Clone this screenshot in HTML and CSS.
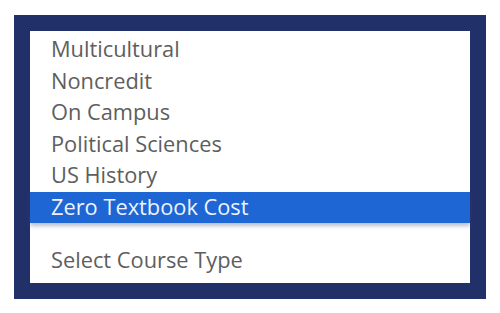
FILE: index.html
```html
<!DOCTYPE html>
<html>
<head>
<meta charset="utf-8">
<link rel="stylesheet" href="styles.css">
</head>
<body>
<div class="frame">
  <ul class="list">
    <li class="opt">Multicultural</li>
    <li class="opt">Noncredit</li>
    <li class="opt">On Campus</li>
    <li class="opt">Political Sciences</li>
    <li class="opt">US History</li>
    <li class="opt selected">Zero Textbook Cost</li>
    <li class="opt placeholder">Select Course Type</li>
  </ul>
</div>
</body>
</html>
```
FILE: styles.css
```css
html, body {
  margin: 0;
  padding: 0;
  background: #ffffff;
}
body {
  width: 500px;
  height: 313px;
  overflow: hidden;
  font-family: "Open Sans", "DejaVu Sans", sans-serif;
}
.frame {
  box-sizing: border-box;
  margin: 15px 0 0 14px;
  width: 472px;
  height: 284px;
  border: 16px solid #22306a;
  background: #ffffff;
}
.list {
  list-style: none;
  margin: 0;
  padding: 3px 0 0 0;
}
.opt {
  height: 31.5px;
  line-height: 30px;
  padding-left: 21px;
  font-size: 21.8px;
  color: #5e5e5e;
  white-space: nowrap;
}
.selected {
  background: #1d66d3;
  color: #eef3ff;
  box-shadow: 0 3px 4px rgba(60, 70, 110, 0.35);
}
.placeholder {
  margin-top: 22px;
}
```
